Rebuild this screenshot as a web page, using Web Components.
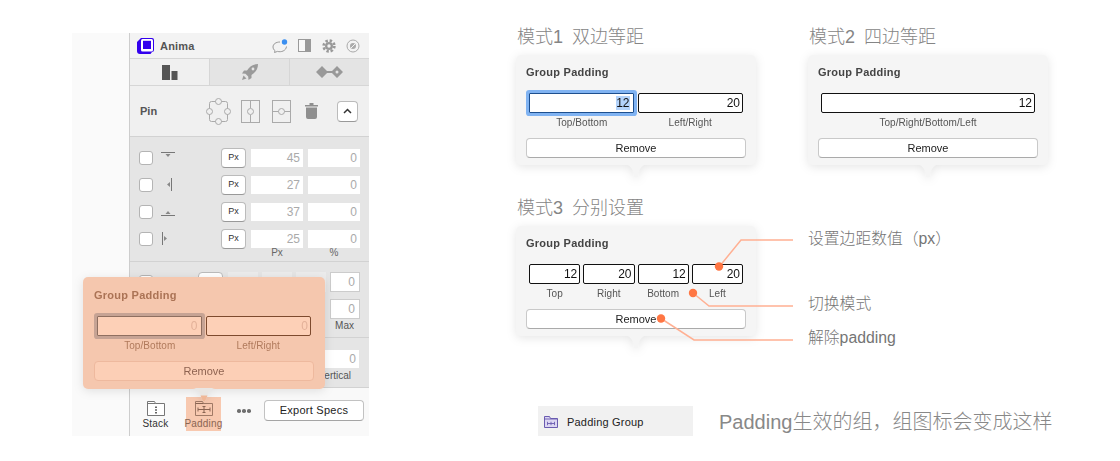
<!DOCTYPE html>
<html>
<head>
<meta charset="utf-8">
<title>Group Padding</title>
<style>
    html, body { margin: 0; height: 461px; overflow: hidden; background: #fff; }
    body { position: relative; font-family: "Liberation Sans", "Noto Sans CJK SC", sans-serif; }
    .orange {
        --card-bg: #f5c7ae; --card-title: #ab7355; --field-bg: #fdd0b7; --field-border: #7d4a2e;
        --field-text: #e3b199; --field-label: #b07a5c; --ring: #c6a394; --ring-border: #8f6f60;
        --btn-bg: #fccfb6; --btn-border: #eeb99e; --btn-text: #8e6351; --arrow: #e9e6e3; --arrow-tip: #f0b797;
        --card-top: 12px; --row-inset: 14px; --btn-inset: 11px; --title-inset: 11px;
    }
</style>
</head>
<body>
<page-layout>
    <anima-panel slot="panel">
        <padding-card class="orange" slot="popup">
            <pad-field value="0" label="Top/Bottom" focused></pad-field>
            <pad-field value="0" label="Left/Right"></pad-field>
        </padding-card>
    </anima-panel>

    <mode-block slot="one" title="模式1&#8194;双边等距">
        <padding-card>
            <pad-field value="12" label="Top/Bottom" focused selected></pad-field>
            <pad-field value="20" label="Left/Right"></pad-field>
        </padding-card>
    </mode-block>
    <mode-block slot="two" title="模式2&#8194;四边等距">
        <padding-card>
            <pad-field value="12" label="Top/Right/Bottom/Left"></pad-field>
        </padding-card>
    </mode-block>
    <mode-block slot="three" title="模式3&#8194;分别设置">
        <padding-card>
            <pad-field value="12" label="Top"></pad-field>
            <pad-field value="20" label="Right"></pad-field>
            <pad-field value="12" label="Bottom"></pad-field>
            <pad-field value="20" label="Left"></pad-field>
        </padding-card>
    </mode-block>
    <note-list slot="notes">
        <span>设置边距数值（px）</span>
        <span>切换模式</span>
        <span>解除padding</span>
    </note-list>
    <group-row slot="group" name="Padding Group">Padding生效的组，组图标会变成这样</group-row>
</page-layout>
<call-outs></call-outs>

<script>
// page frame: panel on the left, the three modes on the right
class PageLayout extends HTMLElement {
    constructor() {
        super();
        this.attachShadow({ mode:'open' }).innerHTML = `
<style>
    :host { display: flex; align-items: flex-start; padding: 27px 0 0 72px; }
    .panel { margin: 6px 147px 0 0; }
    .modes { display: grid; grid-template-columns: 240px 240px; column-gap: 52px; row-gap: 20px; }
    .notes { padding-top: 31px; }
    .group { margin-top: 37px; grid-column: 1 / 3; }
</style>
<div class="panel"><slot name="panel"></slot></div>
<div class="modes">
    <slot name="one"></slot>
    <slot name="two"></slot>
    <slot name="three"></slot>
    <div class="notes"><slot name="notes"></slot></div>
    <div class="group"><slot name="group"></slot></div>
</div>`;
    }
}

class ModeBlock extends HTMLElement {
    constructor() {
        super();
        this.attachShadow({ mode:'open' }).innerHTML = `
<style>
    :host { display: block; }
    h3 { margin: 0 0 8px 1px; height: 20px; font: 300 18px/20px "Liberation Sans", "Noto Sans CJK SC", sans-serif; color: #858585; white-space: pre; }
</style>
<h3>${this.getAttribute('title')}</h3>
<slot></slot>`;
    }
}

class PaddingCard extends HTMLElement {
    constructor() {
        super();
        this.attachShadow({ mode:'open' }).innerHTML = `
<style>
    :host { display: block; filter: drop-shadow(0 2px 5px rgba(0,0,0,.1)); }
    .card {
        box-sizing: border-box; height: var(--card-height, 110px);
        background: var(--card-bg, #f5f5f5); border-radius: 5px;
        padding-top: var(--card-top, 11px);
    }
    .title {
        font: bold 11px/13px "Liberation Sans", sans-serif; letter-spacing: .25px;
        color: var(--card-title, #444); margin-left: var(--title-inset, 10px);
    }
    .fields { display: flex; gap: 3px; margin: 14px var(--row-inset, 13px) 0; }
    ::slotted(pad-field) { flex: 1 1 0; min-width: 0; }
    button {
        display: block; box-sizing: border-box; height: 20px; padding: 0;
        width: calc(100% - 2 * var(--btn-inset, 10px)); margin: 9px var(--btn-inset, 10px) 0;
        background: var(--btn-bg, #fff); color: var(--btn-text, #222);
        border: 1px solid var(--btn-border, #c9c9c9); border-bottom-color: var(--btn-border, #aaa); border-radius: 4px;
        font: 11px "Liberation Sans", sans-serif;
    }
    svg { display: block; margin: -1px auto 0; }
</style>
<div class="card">
    <div class="title">Group Padding</div>
    <div class="fields"><slot></slot></div>
    <button>Remove</button>
</div>
<svg width="26" height="14" viewBox="0 0 26 14"><path d="M0 0C5 0 7 2 9 5L11.500 12.500Q13 14 14.500 12.500L17 5C19 2 21 0 26 0Z" fill="var(--arrow, #f5f5f5)"/><path d="M9.500 7.500H16.500L14.500 12.500Q13 14 11.500 12.500Z" fill="var(--arrow-tip, var(--arrow, #f5f5f5))"/></svg>`;
    }
}

class PadField extends HTMLElement {
    constructor() {
        super();
        const val = this.getAttribute('value'),
              focused = this.hasAttribute('focused'),
              selected = this.hasAttribute('selected');
        this.attachShadow({ mode:'open' }).innerHTML = `
<style>
    :host { display: block; }
    .box {
        box-sizing: border-box; height: 20px; padding-right: 2px; text-align: right;
        background: var(--field-bg, #fff); color: var(--field-text, #111);
        border: 1px solid var(--field-border, #111); border-radius: 2px;
        font: 12px/18px "Liberation Sans", sans-serif;
    }
    .box.focused {
        border-color: var(--ring-border, #1d4f8e); border-radius: 1px; padding-right: 3px;
        box-shadow: 0 0 0 3px var(--ring, #80b3f2);
        margin-right: 1px;
    }
    .sel { background: #b3d3fb; }
    .label {
        margin-top: 4px; text-align: center; white-space: nowrap; letter-spacing: .05px;
        font: 10px/12px "Liberation Sans", sans-serif; color: var(--field-label, #555);
    }
</style>
<div class="box ${focused ? 'focused' : ''}"><span class="${selected ? 'sel' : ''}">${val}</span></div>
<div class="label">${this.getAttribute('label')}</div>`;
    }
}

class NoteList extends HTMLElement {
    constructor() {
        super();
        this.attachShadow({ mode:'open' }).innerHTML = `
<style>
    :host { display: flex; flex-direction: column; font: 300 15.800px/20px "Liberation Sans", "Noto Sans CJK SC", sans-serif; color: #757575; }
    ::slotted(span:nth-child(2)) { margin-top: 45px; }
    ::slotted(span:nth-child(3)) { margin-top: 14px; }
</style>
<slot></slot>`;
    }
}

class GroupRow extends HTMLElement {
    constructor() {
        super();
        this.attachShadow({ mode:'open' }).innerHTML = `
<style>
    :host { display: flex; align-items: flex-start; margin-left: 22px; }
    .layer {
        display: flex; flex: none; align-items: center; box-sizing: border-box; width: 155px; height: 30px;
        padding: 1px 0 0 6px; background: #f1f1f1; font: 11px "Liberation Sans", sans-serif; color: #222; letter-spacing: .2px;
    }
    svg { margin-right: 9px; }
    .text { flex: none; margin: 1px 0 0 26px; font: 300 20px/30px "Liberation Sans", "Noto Sans CJK SC", sans-serif; color: #888; white-space: nowrap; }
</style>
<div class="layer">
    <svg width="14" height="12" viewBox="0 0 14 12"><path d="M.500 11.500V.500h5l1 2h7v9z" fill="#dcd6f2" stroke="#6a5bb0"/><path d="M.500 3h13M3.500 7.500h7M3.500 5.800v3.400M10.500 5.800v3.400M7 5.800v3.400" fill="none" stroke="#6a5bb0" stroke-width=".9"/></svg>
    ${this.getAttribute('name')}
</div>
<div class="text"><slot></slot></div>`;
    }
}

// orange call-out lines lie over the third card
class CallOuts extends HTMLElement {
    constructor() {
        super();
        const lines = [
            ['M719 267L741 240H793', 719, 266.5],
            ['M693 293L709 306H793', 693, 293],
            ['M661 318.500L694 340H793', 661, 318.5]
        ];
        this.attachShadow({ mode:'open' }).innerHTML = `
<style>
    :host { position: absolute; left: 0; top: 0; pointer-events: none; }
    svg { display: block; }
</style>
<svg width="1120" height="461">
    ${lines.map(([d,x,y]) => `<path d="${d}" fill="none" stroke="#ffb093" stroke-width="1.500"/><circle cx="${x}" cy="${y}" r="4.200" fill="#ff7643"/>`).join('')}
</svg>`;
    }
}

// a row of the pin section: checkbox, edge glyph, unit button, two values
class PinRow extends HTMLElement {
    constructor() {
        super();
        this.attachShadow({ mode:'open' }).innerHTML = `
<style>
    :host { display: flex; align-items: center; height: 27px; padding: 0 9px; box-sizing: border-box; }
    .check { width: 14px; height: 14px; box-sizing: border-box; background: #fff; border: 1px solid #b4b4b4; border-radius: 3px; margin-top: 1px; }
    .glyph { width: 16px; height: 14px; margin-left: 8px; }
    .unit {
        margin-left: auto; width: 25px; height: 20px; box-sizing: border-box; background: #fff;
        border: 1px solid #bbb; border-bottom-color: #999; border-radius: 4px; text-align: center;
        font: 9px/16px "Liberation Sans", sans-serif; color: #333;
    }
    .val {
        width: 52px; height: 18px; margin-left: 5px; background: #fff; text-align: right; padding-right: 3px; box-sizing: border-box;
        font: 12px/19px "Liberation Sans", sans-serif; color: #aaa;
    }
</style>
<div class="check"></div>
<div class="glyph"><slot></slot></div>
<div class="unit">Px</div>
<div class="val">${this.getAttribute('a')}</div>
<div class="val">${this.getAttribute('b')}</div>`;
    }
}

class AnimaPanel extends HTMLElement {
    constructor() {
        super();
        const gl = (d, p) => `<svg width="16" height="14" viewBox="0 0 16 14" style="display:block"><path d="${d}" stroke="#777" fill="none"/><path d="${p}" fill="#888"/></svg>`;
        this.attachShadow({ mode:'open' }).innerHTML = `
<style>
    :host { display: block; position: relative; width: 297px; height: 403px; background: #fafafa; font-family: "Liberation Sans", sans-serif; }
    .side { position: absolute; left: 57px; right: 0; top: 0; bottom: 0; border-left: 1px solid #cdcdcd; display: flex; flex-direction: column; }
    .head { display: flex; align-items: center; height: 26px; flex: none; box-sizing: border-box; padding-left: 7px; background: #f3f3f3; border-bottom: 1px solid #d6d6d6; }
    .head b { margin-left: 6px; font-size: 11px; color: #555; letter-spacing: .2px; }
    .head .tools { margin-left: auto; display: flex; align-items: center; gap: 9px; padding-right: 9px; }
    .tabs { display: flex; height: 27px; flex: none; box-sizing: border-box; border-bottom: 1px solid #d6d6d6; background: #e4e4e4; }
    .tabs div { flex: 1 1 0; display: flex; align-items: center; justify-content: center; border-left: 1px solid #d6d6d6; }
    .tabs div:first-child { background: #f0f0f0; border-left: 0; }
    .pin { display: flex; align-items: center; height: 51px; flex: none; box-sizing: border-box; background: #f0f0f0; border-bottom: 1px solid #d2d2d2; padding-left: 10px; }
    .pin b { width: 66px; font-size: 11px; color: #555; }
    .pin > svg { display: block; margin-right: 10px; }
    .up { width: 21px; height: 21px; margin-left: 9px; box-sizing: border-box; background: #fff; border: 1px solid #bbb; border-bottom-color: #999; border-radius: 4px; display: flex; align-items: center; justify-content: center; }
    .pins { background: #e5e5e5; height: 125px; flex: none; box-sizing: border-box; padding-top: 7px; border-bottom: 1px solid #d2d2d2; position: relative; }
    .units { display: flex; justify-content: flex-end; padding-right: 9px; margin-top: -5px; font-size: 10px; line-height: 12px; color: #666; }
    .units span { width: 52px; margin-left: 5px; text-align: center; }
    .size { background: #e5e5e5; height: 76px; flex: none; box-sizing: border-box; border-bottom: 1px solid #d2d2d2; padding-top: 10px; }
    .boxes { display: flex; justify-content: flex-end; padding: 0 9px; gap: 4px; height: 27px; }
    .boxes i { display: block; width: 30px; height: 20px; background: #ececec; }
    .boxes i.last { background: #fff; box-sizing: border-box; border: 1px solid #ccc; font: normal 12px/19px "Liberation Sans", sans-serif; color: #aaa; text-align: right; padding-right: 4px; }
    .boxes i.chk { width: 14px; height: 14px; margin: 3px auto 0 0; box-sizing: border-box; background: #fff; border: 1px solid #b4b4b4; border-radius: 3px; }
    .boxes i.btn { width: 25px; margin-right: 1px; box-sizing: border-box; background: #fff; border: 1px solid #bbb; border-radius: 4px; }
    .max { text-align: right; padding-right: 15px; font-size: 10px; line-height: 12px; color: #555; }
    .vert { background: #e5e5e5; height: 50px; flex: none; box-sizing: border-box; border-bottom: 1px solid #d2d2d2; padding-top: 12px; }
    .vert .v { margin-left: auto; margin-right: 10px; width: 60px; height: 18px; background: #fff; font-size: 12px; line-height: 19px; color: #aaa; text-align: right; padding-right: 3px; box-sizing: border-box; }
    .vert .l { text-align: right; padding-right: 18px; font-size: 10px; line-height: 14px; margin-top: 1px; color: #555; }
    .foot { flex: 1; display: flex; align-items: flex-start; padding: 9px 0 0 8px; background: #f9f9f9; }
    .tool { width: 35px; height: 34px; margin-right: 13px; display: flex; flex-direction: column; align-items: center; font-size: 10px; line-height: 12px; color: #333; letter-spacing: .2px; padding-top: 4px; box-sizing: border-box; white-space: nowrap; }
    .tool svg { display: block; margin-bottom: 2px; }
    .tool.on { background: #f8c9b0; color: #8a6552; }
    .dots { display: flex; gap: 1.600px; margin: 12px 13px 0 3px; }
    .dots i { width: 3.600px; height: 3.600px; border-radius: 50%; background: #6f6f6f; }
    .export { width: 100px; height: 21px; margin-top: 3px; box-sizing: border-box; background: #fff; border: 1px solid #c2c2c2; border-bottom-color: #a5a5a5; border-radius: 4px; text-align: center; font-size: 11px; line-height: 19px; color: #222; letter-spacing: .25px; }
    .popup { position: absolute; left: 11px; top: 244px; width: 242px; --card-height: 112px; }
</style>
<div class="side">
    <div class="head">
        <svg width="17" height="16" viewBox="0 0 17 16"><path d="M4 0H15a2 2 0 0 1 2 2V12a2 2 0 0 1-2 2L13.500 16H3a3 3 0 0 1-3-3V4z" fill="#3300ee"/><rect x="4" y="1" width="12" height="12.500" rx="1.500" fill="#fff"/><rect x="6" y="2.800" width="8" height="8.200" fill="#3300ee"/></svg>
        <b>Anima</b>
        <div class="tools">
            <svg width="16" height="14" viewBox="0 0 16 14"><path d="M8 3C4 3 1 5 1 8c0 1.600 1 3 2 3.700L2.500 13.500 5.500 12.400C9 13.400 14 12 14.500 7.500" fill="none" stroke="#999"/><circle cx="12.500" cy="3" r="2.700" fill="#3b8ff0"/></svg>
            <svg width="13" height="13" viewBox="0 0 13 13" style="margin-left:1px"><rect width="13" height="13" fill="#999"/><rect x="1" y="1" width="6" height="11" fill="#f8f8f8"/></svg>
            <svg width="14" height="14" viewBox="0 0 14 14" style="margin-left:2px"><circle cx="7" cy="7" r="5.400" fill="none" stroke="#999" stroke-width="2.600" stroke-dasharray="2.400 1.840"/><circle cx="7" cy="7" r="4" fill="#999"/><circle cx="7" cy="7" r="1.700" fill="#f3f3f3"/></svg>
            <svg width="14" height="14" viewBox="0 0 14 14" style="margin-left:1px"><circle cx="7" cy="7" r="6" fill="none" stroke="#aaa"/><circle cx="7" cy="7" r="3" fill="#aaa"/><path d="M5 9L9 5" stroke="#f3f3f3"/></svg>
        </div>
    </div>
    <div class="tabs">
        <div><svg width="16" height="15" viewBox="0 0 16 15"><rect width="8" height="15" fill="#555"/><rect x="9.500" y="6" width="6" height="9" fill="#555"/></svg></div>
        <div><svg width="16" height="16" viewBox="0 0 16 16"><path d="M16 0C11 0 7.500 2.500 5 6.500H2L0 9.500 3.500 9.800 6.200 12.500 6.500 16 9.500 14V11C13.500 8.500 16 5 16 0ZM1.500 11.500L0 16 4.500 14.500Z" fill="#9a9a9a"/><circle cx="11" cy="5" r="1.400" fill="#e4e4e4"/></svg></div>
        <div><svg width="27" height="12" viewBox="0 0 27 12"><path d="M6 0l6 6-6 6-6-6zM21 0l6 6-6 6-6-6z" fill="#999"/><rect x="9" y="5" width="9" height="2" fill="#999"/><circle cx="21" cy="6" r="1.500" fill="#e4e4e4"/></svg></div>
    </div>
    <div class="pin">
        <b>Pin</b>
        <svg width="25" height="27" viewBox="0 0 25 27"><rect x="3.500" y="3.500" width="18" height="20" rx="2" fill="none" stroke="#aaa"/><g fill="#f0f0f0" stroke="#aaa"><circle cx="12.500" cy="3.500" r="3"/><circle cx="12.500" cy="23.500" r="3"/><circle cx="3.500" cy="13.500" r="3"/><circle cx="21.500" cy="13.500" r="3"/></g></svg>
        <svg width="19" height="23" viewBox="0 0 19 23"><rect x=".500" y=".500" width="18" height="22" fill="none" stroke="#aaa"/><path d="M9.500 0V8M9.500 15V23" stroke="#aaa"/><circle cx="9.500" cy="11.500" r="3" fill="none" stroke="#aaa"/></svg>
        <svg width="19" height="23" viewBox="0 0 19 23" style="margin-right:14px;margin-left:2px"><rect x=".500" y=".500" width="18" height="22" fill="none" stroke="#aaa"/><path d="M0 11.500H6.500M12.500 11.500H19" stroke="#aaa"/><circle cx="9.500" cy="11.500" r="3" fill="none" stroke="#aaa"/></svg>
        <svg width="13" height="16" viewBox="0 0 13 16" style="margin-right:10px"><path d="M0 2h13v1.500H0zM4.500 0h4v2h-4zM1 4.500h11V14a2 2 0 0 1-2 2H3a2 2 0 0 1-2-2z" fill="#8f8f8f"/></svg>
        <div class="up"><svg width="9" height="6" viewBox="0 0 9 6"><path d="M1 5L4.500 1.500 8 5" fill="none" stroke="#333" stroke-width="1.500"/></svg></div>
    </div>
    <div class="pins">
        <pin-row a="45" b="0">${gl('M0 1.500H14','M4.500 3h5L7 6z')}</pin-row>
        <pin-row a="27" b="0"><span style="display:block;margin-left:1px">${gl('M9.500 0V13','M8 4v5L5 6.500z')}</span></pin-row>
        <pin-row a="37" b="0">${gl('M0 10.500H14','M4.500 9h5L7 6z')}</pin-row>
        <pin-row a="25" b="0"><span style="display:block;margin-left:-1px">${gl('M2.500 0V13','M4 4v5L7 6.500z')}</span></pin-row>
        <div class="units"><span>Px</span><span>%</span></div>
    </div>
    <div class="size">
        <div class="boxes"><i class="chk"></i><i class="btn"></i><i></i><i></i><i></i><i class="last">0</i></div>
        <div class="boxes" style="height:21px"><i class="last">0</i></div>
        <div class="max">Max</div>
    </div>
    <div class="vert">
        <div class="v">0</div>
        <div class="l">Vertical</div>
    </div>
    <div class="foot">
        <div class="tool">
            <svg width="18" height="15" viewBox="0 0 18 15"><path d="M.500 14.500V.500h7l1 2h9v12z" fill="#fff" stroke="#777"/><path d="M.500 2.500h8" stroke="#777"/><path d="M9 5.500v1.500M9 8.200v1.500M9 11v1.500" stroke="#333" stroke-width="1.500"/></svg>
            Stack
        </div>
        <div class="tool on">
            <svg width="18" height="15" viewBox="0 0 18 15"><path d="M.500 14.500V.500h7l1 2h9v12z" fill="none" stroke="#a17a66"/><path d="M.500 2.500h8M3 8.500h12M3 6.500v4M15 6.500v4M9 5.500v6M7.500 5.500h3M7.500 11.500h3" fill="none" stroke="#8a6552"/></svg>
            Padding
        </div>
        <div class="dots"><i></i><i></i><i></i></div>
        <div class="export">Export Specs</div>
    </div>
</div>
<div class="popup"><slot name="popup"></slot></div>`;
    }
}

customElements.define('pad-field', PadField);
customElements.define('padding-card', PaddingCard);
customElements.define('mode-block', ModeBlock);
customElements.define('note-list', NoteList);
customElements.define('group-row', GroupRow);
customElements.define('call-outs', CallOuts);
customElements.define('pin-row', PinRow);
customElements.define('anima-panel', AnimaPanel);
customElements.define('page-layout', PageLayout);
</script>
</body>
</html>
